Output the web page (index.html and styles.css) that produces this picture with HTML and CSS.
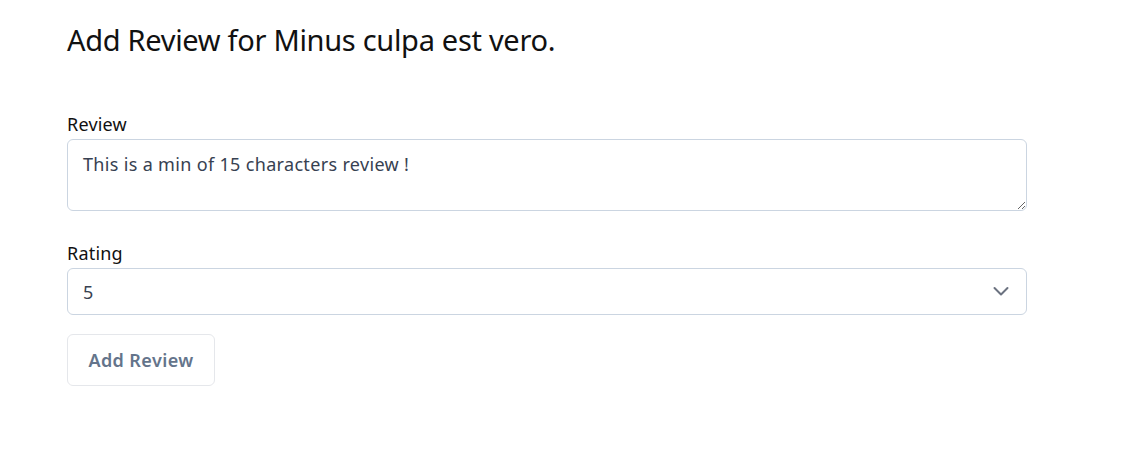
FILE: index.html
```html
<!DOCTYPE html>
<html>
<head>
<meta charset="utf-8">
<link rel="stylesheet" href="styles.css">
</head>
<body>
<main class="page">
  <h1 class="title">Add Review for Minus culpa est vero.</h1>
  <form class="form">
    <div class="field">
      <label class="label" for="review">Review</label>
      <textarea id="review" class="textarea">This is a min of 15 characters review !</textarea>
    </div>
    <div class="field">
      <label class="label" for="rating">Rating</label>
      <div class="select-wrap">
        <select id="rating" class="select">
          <option>5</option>
        </select>
        <svg class="chevron" width="18" height="18" viewBox="0 0 18 18" fill="none"><path d="M2.5 6l6.5 6.5 6.5-6.5" stroke="#6b7280" stroke-width="2" stroke-linecap="round" stroke-linejoin="round"/></svg>
      </div>
    </div>
    <button type="button" class="btn">Add Review</button>
  </form>
</main>
</body>
</html>
```
FILE: styles.css
```css
* { box-sizing: border-box; }
body {
  margin: 0;
  background: #fff;
  font-family: "Noto Sans", "Open Sans", sans-serif;
  color: #111;
}
.page {
  padding: 20px 67px 0 67px;
  width: 1094px;
}
.title {
  margin: 0;
  font-weight: 400;
  font-size: 29px;
  line-height: 40px;
  color: #111;
  letter-spacing: -0.3px;
}
.form {
  margin-top: 52px;
  display: flex;
  flex-direction: column;
}
.field {
  display: flex;
  flex-direction: column;
  margin-bottom: 19px;
}
.field + .field { margin-top: 11px; }
.label {
  font-size: 18px;
  line-height: 24px;
  color: #111;
  margin-bottom: 3px;
  letter-spacing: 0.2px;
}
.textarea {
  width: 960px;
  height: 72px;
  border: 1px solid #cbd5e1;
  border-radius: 6px;
  padding: 10px 15px;
  font-family: inherit;
  font-size: 18px;
  line-height: 28px;
  letter-spacing: 0.33px;
  color: #374151;
  resize: vertical;
  outline: none;
}
.select-wrap {
  position: relative;
  width: 960px;
}
.select {
  width: 100%;
  height: 47px;
  appearance: none;
  -webkit-appearance: none;
  background: #fff;
  border: 1px solid #cbd5e1;
  border-radius: 6px;
  padding: 0 15px;
  font-family: inherit;
  font-size: 18px;
  color: #374151;
  outline: none;
}
.chevron {
  position: absolute;
  right: 17px;
  top: 14px;
  pointer-events: none;
}
.btn {
  align-self: flex-start;
  width: 148px;
  height: 52px;
  background: #fff;
  border: 1px solid #e5e7eb;
  border-radius: 6px;
  font-family: inherit;
  font-size: 18px;
  font-weight: 600;
  letter-spacing: 0.4px;
  color: #64748b;
}
```
